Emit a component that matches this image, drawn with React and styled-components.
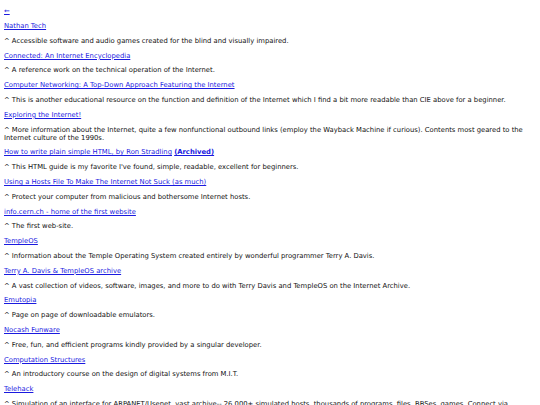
import React from "react";
import styled, { createGlobalStyle } from "styled-components";

const GlobalStyle = createGlobalStyle`
  html, body {
    margin: 0;
    padding: 0;
    background: #ffffff;
  }
  body {
    padding: 0 16px 0 4px;
    font-family: "DejaVu Sans", Verdana, sans-serif;
    font-size: 6.8px;
    line-height: 8px;
    color: #111111;
  }
`;

const Page = styled.main`
  display: flex;
  flex-direction: column;
  gap: 6.8px;
  padding-top: 7.2px;
`;

const Line = styled.p`
  margin: 0;
`;

const Link = styled.a`
  color: #1a1adf;
  text-decoration: underline;
  font-weight: ${(props) => (props.bold ? "bold" : "normal")};
`;

const LINKS = [
  {
    title: "Nathan Tech",
    desc: "Accessible software and audio games created for the blind and visually impaired.",
  },
  {
    title: "Connected: An Internet Encyclopedia",
    desc: "A reference work on the technical operation of the Internet.",
  },
  {
    title: "Computer Networking: A Top-Down Approach Featuring the Internet",
    desc: "This is another educational resource on the function and definition of the Internet which I find a bit more readable than CIE above for a beginner.",
  },
  {
    title: "Exploring the Internet!",
    desc: "More information about the Internet, quite a few nonfunctional outbound links (employ the Wayback Machine if curious). Contents most geared to the Internet culture of the 1990s.",
  },
  {
    title: "How to write plain simple HTML, by Ron Stradling",
    archived: true,
    desc: "This HTML guide is my favorite I've found, simple, readable, excellent for beginners.",
  },
  {
    title: "Using a Hosts File To Make The Internet Not Suck (as much)",
    desc: "Protect your computer from malicious and bothersome Internet hosts.",
  },
  {
    title: "info.cern.ch - home of the first website",
    desc: "The first web-site.",
  },
  {
    title: "TempleOS",
    desc: "Information about the Temple Operating System created entirely by wonderful programmer Terry A. Davis.",
  },
  {
    title: "Terry A. Davis & TempleOS archive",
    desc: "A vast collection of videos, software, images, and more to do with Terry Davis and TempleOS on the Internet Archive.",
  },
  {
    title: "Emutopia",
    desc: "Page on page of downloadable emulators.",
  },
  {
    title: "Nocash Funware",
    desc: "Free, fun, and efficient programs kindly provided by a singular developer.",
  },
  {
    title: "Computation Structures",
    desc: "An introductory course on the design of digital systems from M.I.T.",
  },
  {
    title: "Telehack",
    desc: "Simulation of an interface for ARPANET/Usenet, vast archive-- 26,000+ simulated hosts, thousands of programs, files, BBSes, games. Connect via telnet or use it right in the browser.",
  },
];

export default function App() {
  return (
    <>
      <GlobalStyle />
      <Page>
        <Line>
          <Link href="#">←</Link>
        </Line>
        {LINKS.map((item) => (
          <React.Fragment key={item.title}>
            <Line>
              <Link href="#">{item.title}</Link>
              {item.archived && (
                <>
                  {" "}
                  <Link href="#" bold>
                    (Archived)
                  </Link>
                </>
              )}
            </Line>
            <Line>^ {item.desc}</Line>
          </React.Fragment>
        ))}
      </Page>
    </>
  );
}
